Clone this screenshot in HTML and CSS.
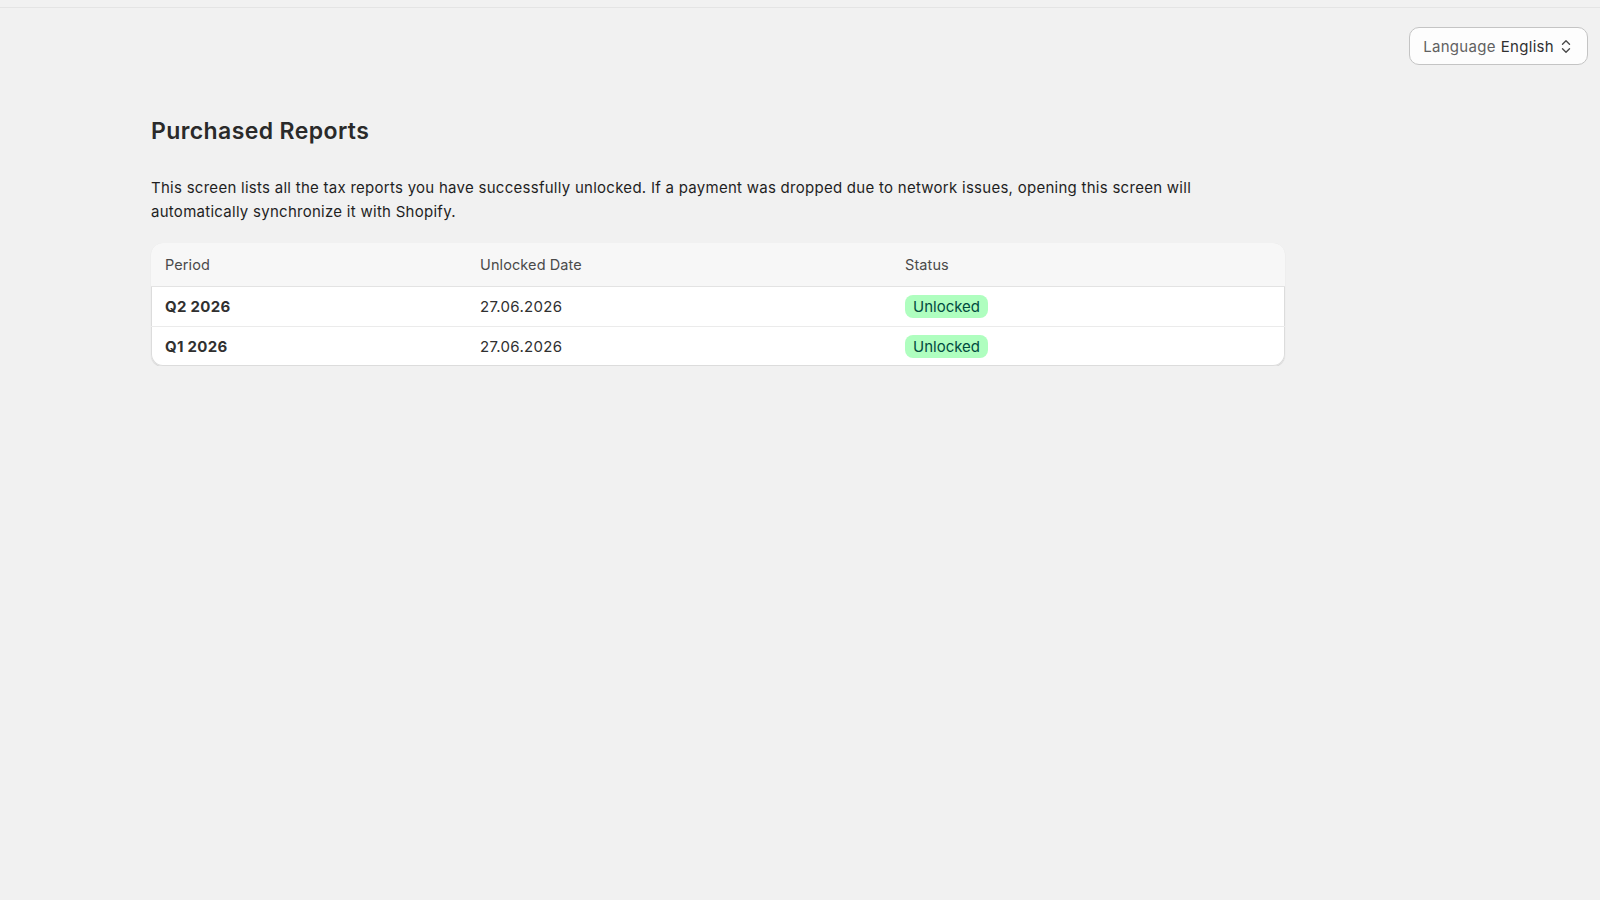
FILE: index.html
```html
<!DOCTYPE html>
<html lang="en">
<head>
<meta charset="utf-8">
<title>Purchased Reports</title>
<link rel="stylesheet" href="styles.css">
</head>
<body>
<div class="topline"></div>
<header class="toolbar">
  <button class="lang-select" type="button">
    <span class="lang-label">Language</span>
    <span class="lang-value">English</span>
    <svg class="lang-icon" width="10" height="15" viewBox="0 0 10 15" aria-hidden="true">
      <path d="M1.5 5.2 5 1.7l3.5 3.5M1.5 9.8 5 13.3l3.5-3.5" fill="none" stroke="#4a4a4a" stroke-width="1.4" stroke-linecap="round" stroke-linejoin="round"/>
    </svg>
  </button>
</header>
<main class="page">
  <h1 class="page-title">Purchased Reports</h1>
  <p class="page-intro">This screen lists all the tax reports you have successfully unlocked. If a payment was dropped due to network issues, opening this screen will automatically synchronize it with Shopify.</p>
  <div class="card">
    <table class="reports">
      <thead>
        <tr>
          <th class="col-period">Period</th>
          <th class="col-date">Unlocked Date</th>
          <th class="col-status">Status</th>
        </tr>
      </thead>
      <tbody>
        <tr>
          <td class="period">Q2 2026</td>
          <td>27.06.2026</td>
          <td><span class="badge">Unlocked</span></td>
        </tr>
        <tr>
          <td class="period">Q1 2026</td>
          <td>27.06.2026</td>
          <td><span class="badge">Unlocked</span></td>
        </tr>
      </tbody>
    </table>
  </div>
</main>
</body>
</html>
```
FILE: styles.css
```css
* { box-sizing: border-box; }

html, body {
  margin: 0;
  background: #f1f1f1;
  color: #303030;
  font-family: Inter, "Noto Sans", "Liberation Sans", sans-serif;
  font-size: 15px;
  letter-spacing: 0.3px;
}

.topline {
  height: 8px;
  border-bottom: 1px solid #e4e4e4;
}

.toolbar {
  display: flex;
  justify-content: flex-end;
  padding: 19px 12px 0 0;
}

.lang-select {
  display: flex;
  align-items: center;
  height: 38px;
  padding: 0 16px 0 13px;
  background: #fdfdfd;
  border: 1px solid #c4c4c4;
  border-radius: 10px;
  font-family: inherit;
  font-size: 15px;
  letter-spacing: 0.3px;
  cursor: pointer;
}

.lang-label { color: #616161; }
.lang-value { color: #303030; margin-left: 5px; }
.lang-icon { margin-left: 7px; }

.page {
  width: 1134px;
  margin-left: 151px;
  padding-top: 52px;
}

.page-title {
  margin: 0;
  font-size: 23px;
  line-height: 28px;
  font-weight: 600;
  color: #2a2a2a;
  letter-spacing: 0.4px;
}

.page-intro {
  margin: 31px 0 0;
  font-size: 15px;
  line-height: 23.5px;
  color: #1f1f1f;
  letter-spacing: 0.27px;
}

.card {
  margin-top: 20px;
  background: #ffffff;
  border-radius: 12px;
  overflow: hidden;
  box-shadow: inset 0 0 0 1px #dcdcdc, 0 1px 1px rgba(0, 0, 0, 0.14);
}

.reports {
  width: 100%;
  border-collapse: collapse;
  font-size: 15px;
}

.reports th,
.reports td {
  text-align: left;
  padding: 0 14px;
}

.reports th {
  height: 43px;
  background: #f7f7f7;
  font-size: 14.5px;
  font-weight: 400;
  letter-spacing: 0.1px;
  color: #4a4a4a;
  border-bottom: 1px solid #e3e3e3;
}

.reports td {
  height: 40px;
  color: #303030;
}

.reports tbody tr + tr td {
  border-top: 1px solid #ebebeb;
}

.col-period { width: 315px; }
.col-date { width: 425px; }

.period {
  font-weight: 650;
  color: #1a1a1a;
}

.badge {
  display: inline-block;
  height: 23px;
  line-height: 23px;
  padding: 0 8px;
  border-radius: 8px;
  background: #affebf;
  color: #014b40;
  font-weight: 400;
  letter-spacing: 0;
}
```
